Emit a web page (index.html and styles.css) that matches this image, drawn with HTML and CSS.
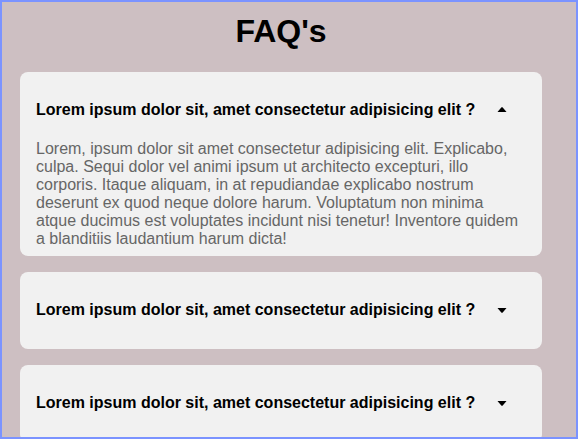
FILE: index.html
```
<!DOCTYPE html>
<html lang="en">
<head>
<meta charset="utf-8">
<meta name="viewport" content="width=device-width, initial-scale=1">
<title>FAQ's</title>
<link rel="stylesheet" href="styles.css">
</head>
<body>
<main class="page">
  <h1 class="title">FAQ's</h1>
  <div class="faq-list">
    <section class="card card-open">
      <h2 class="heading"><button class="question" type="button" aria-expanded="true" aria-controls="answer-1">Lorem ipsum dolor sit, amet consectetur adipisicing elit ?
        <svg class="caret" viewBox="0 0 10 6" aria-hidden="true"><path d="M.5 5 4.5 .3h1l4 4.7z"/></svg></button></h2>
      <p class="answer" id="answer-1">Lorem, ipsum dolor sit amet consectetur adipisicing elit. Explicabo, culpa. Sequi dolor vel animi ipsum ut architecto excepturi, illo corporis. Itaque aliquam, in at repudiandae explicabo nostrum deserunt ex quod neque dolore harum. Voluptatum non minima atque ducimus est voluptates incidunt nisi tenetur! Inventore quidem a blanditiis laudantium harum dicta!</p>
    </section>
    <section class="card">
      <h2 class="heading"><button class="question" type="button" aria-expanded="false">Lorem ipsum dolor sit, amet consectetur adipisicing elit ?
        <svg class="caret" viewBox="0 0 10 6" aria-hidden="true"><path d="M.5 1h9l-4 4.7h-1z"/></svg></button></h2>
    </section>
    <section class="card">
      <h2 class="heading"><button class="question" type="button" aria-expanded="false">Lorem ipsum dolor sit, amet consectetur adipisicing elit ?
        <svg class="caret" viewBox="0 0 10 6" aria-hidden="true"><path d="M.5 1h9l-4 4.7h-1z"/></svg></button></h2>
    </section>
  </div>
</main>
</body>
</html>
```
FILE: styles.css
```
* {
  box-sizing: border-box;
}

body {
  margin: 0;
  font-family: "Liberation Sans", Arial, sans-serif;
  font-size: 16px;
  line-height: 18px;
}

.page {
  height: 100vh;
  overflow: hidden;
  padding: 10px 34px 0 18px;
  border: 2px solid #7b93ff;
  background: #cdbfc2;
}

.title {
  margin: 0 0 22px;
  font-size: 32px;
  line-height: 38px;
  text-align: center;
}

.faq-list {
  display: flex;
  flex-direction: column;
  gap: 16px;
}

.card {
  padding: 8px 16px 9px;
  border-radius: 8px;
  background: #f1f1f1;
}

.card-open {
  padding-bottom: 8px;
}

.heading {
  margin: 0;
  font-size: 16px;
}

.question {
  display: flex;
  align-items: center;
  gap: 22px;
  width: 100%;
  height: 60px;
  padding: 0;
  border: 0;
  background: none;
  color: #000;
  font: inherit;
  text-align: left;
  cursor: pointer;
}

.caret {
  flex: none;
  width: 10px;
  height: 6px;
}

.answer {
  margin: 0;
  color: #666;
}
```
